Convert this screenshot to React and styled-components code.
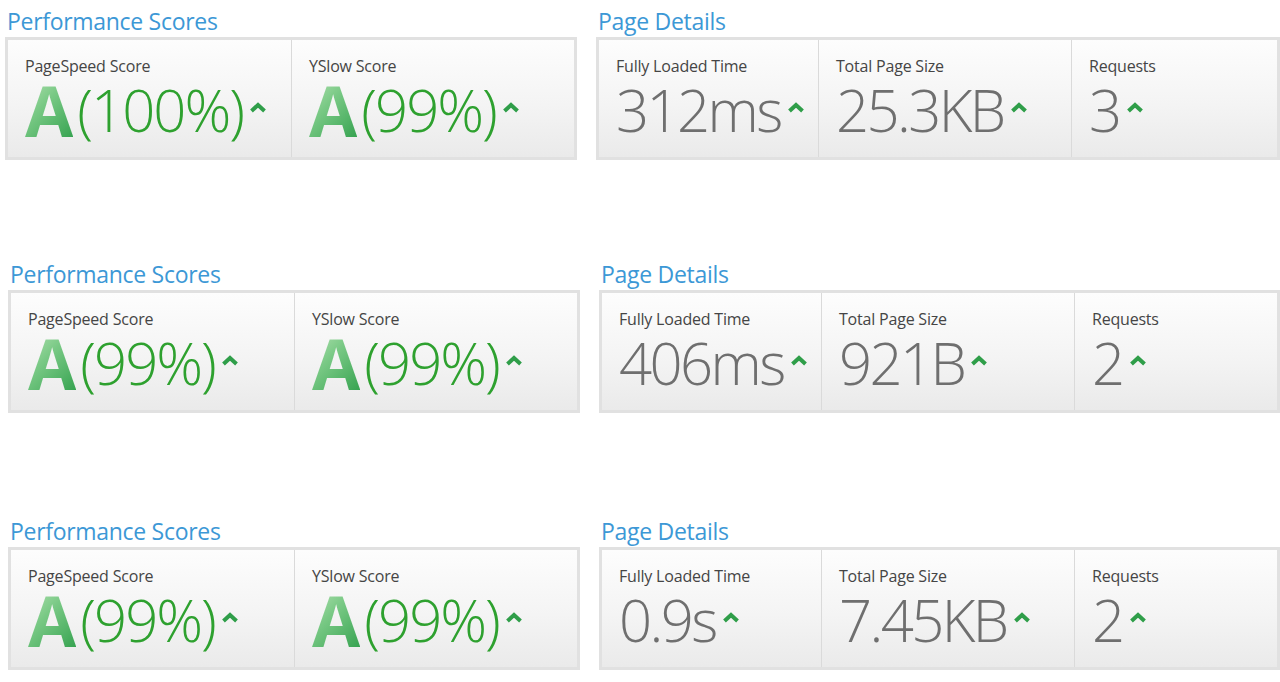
import React from 'react'
import styled, { createGlobalStyle } from 'styled-components'

const GlobalStyle = createGlobalStyle`
  html, body {
    margin: 0;
    padding: 0;
    background: #ffffff;
  }
  body {
    font-family: "Open Sans", "DejaVu Sans", sans-serif;
    width: 1280px;
    height: 682px;
    overflow: hidden;
  }
`

const Page = styled.div`
  display: flex;
  flex-direction: column;
`

const ReportRow = styled.div`
  display: grid;
  grid-template-columns: 572px 1fr;
  column-gap: 19px;
  padding-left: ${p => p.shift}px;
  margin-top: ${p => p.top}px;
`

const Panel = styled.section`
  display: flex;
  flex-direction: column;
  min-width: 0;
`

const PanelTitle = styled.h2`
  margin: 0;
  height: 37px;
  padding-left: 2px;
  font-family: "Open Sans", sans-serif;
  font-weight: 400;
  font-size: 23px;
  line-height: 42px;
  color: #3c98d6;
  letter-spacing: -0.3px;
`

const Box = styled.div`
  display: grid;
  grid-template-columns: ${p => p.cols};
  height: 123px;
  box-sizing: border-box;
  border: 3px solid #e1e1e1;
  background: linear-gradient(to bottom, #fdfdfd 0%, #f4f4f4 55%, #eaeaea 100%);
`

const Cell = styled.div`
  display: flex;
  flex-direction: column;
  padding: 17px 0 0 17px;
  border-left: 1px solid #dadada;
  &:first-child {
    border-left: none;
  }
`

const Label = styled.div`
  font-family: "Open Sans", sans-serif;
  font-size: 16px;
  line-height: 18px;
  color: #454545;
  letter-spacing: -0.2px;
`

const Value = styled.div`
  display: flex;
  align-items: center;
  height: 62px;
  margin-top: 4px;
`

const Grade = styled.span`
  font-family: "Open Sans", sans-serif;
  font-weight: 700;
  font-size: 70px;
  line-height: 62px;
  margin-right: 4px;
  background: linear-gradient(135deg, #b4e2b2 0%, #79c985 40%, #33a14e 100%);
  -webkit-background-clip: text;
  background-clip: text;
  color: transparent;
`

const Figure = styled.span`
  font-family: "Open Sans", sans-serif;
  font-weight: 300;
  font-size: 58px;
  line-height: 62px;
  letter-spacing: ${p => (p.good ? -2 : -2.6)}px;
  color: ${p => (p.good ? '#2ea12f' : '#6f6f6f')};
`

const Caret = styled.svg`
  width: 18px;
  height: 11px;
  margin-left: 6px;
  margin-top: -6px;
  flex: none;
`

const Up = () => (
  <Caret viewBox="0 0 18 11">
    <path d="M2.5 9 L9 3 L15.5 9" fill="none" stroke="#2f9e49" strokeWidth="4" strokeLinejoin="miter" />
  </Caret>
)

const rows = [
  {
    top: 0,
    shift: 5,
    scores: [
      { label: 'PageSpeed Score', pct: '100%' },
      { label: 'YSlow Score', pct: '99%' },
    ],
    details: ['312ms', '25.3KB', '3'],
  },
  {
    top: 93,
    shift: 8,
    scores: [
      { label: 'PageSpeed Score', pct: '99%' },
      { label: 'YSlow Score', pct: '99%' },
    ],
    details: ['406ms', '921B', '2'],
  },
  {
    top: 97,
    shift: 8,
    scores: [
      { label: 'PageSpeed Score', pct: '99%' },
      { label: 'YSlow Score', pct: '99%' },
    ],
    details: ['0.9s', '7.45KB', '2'],
  },
]

const detailLabels = ['Fully Loaded Time', 'Total Page Size', 'Requests']

export default function App() {
  return (
    <Page>
      <GlobalStyle />
      {rows.map((row, i) => (
        <ReportRow key={i} top={row.top} shift={row.shift}>
          <Panel>
            <PanelTitle>Performance Scores</PanelTitle>
            <Box cols="283px 1fr">
              {row.scores.map(s => (
                <Cell key={s.label}>
                  <Label>{s.label}</Label>
                  <Value>
                    <Grade>A</Grade>
                    <Figure good>({s.pct})</Figure>
                    <Up />
                  </Value>
                </Cell>
              ))}
            </Box>
          </Panel>
          <Panel>
            <PanelTitle>Page Details</PanelTitle>
            <Box cols="219px 253px 1fr">
              {row.details.map((d, j) => (
                <Cell key={j}>
                  <Label>{detailLabels[j]}</Label>
                  <Value>
                    <Figure>{d}</Figure>
                    <Up />
                  </Value>
                </Cell>
              ))}
            </Box>
          </Panel>
        </ReportRow>
      ))}
    </Page>
  )
}
